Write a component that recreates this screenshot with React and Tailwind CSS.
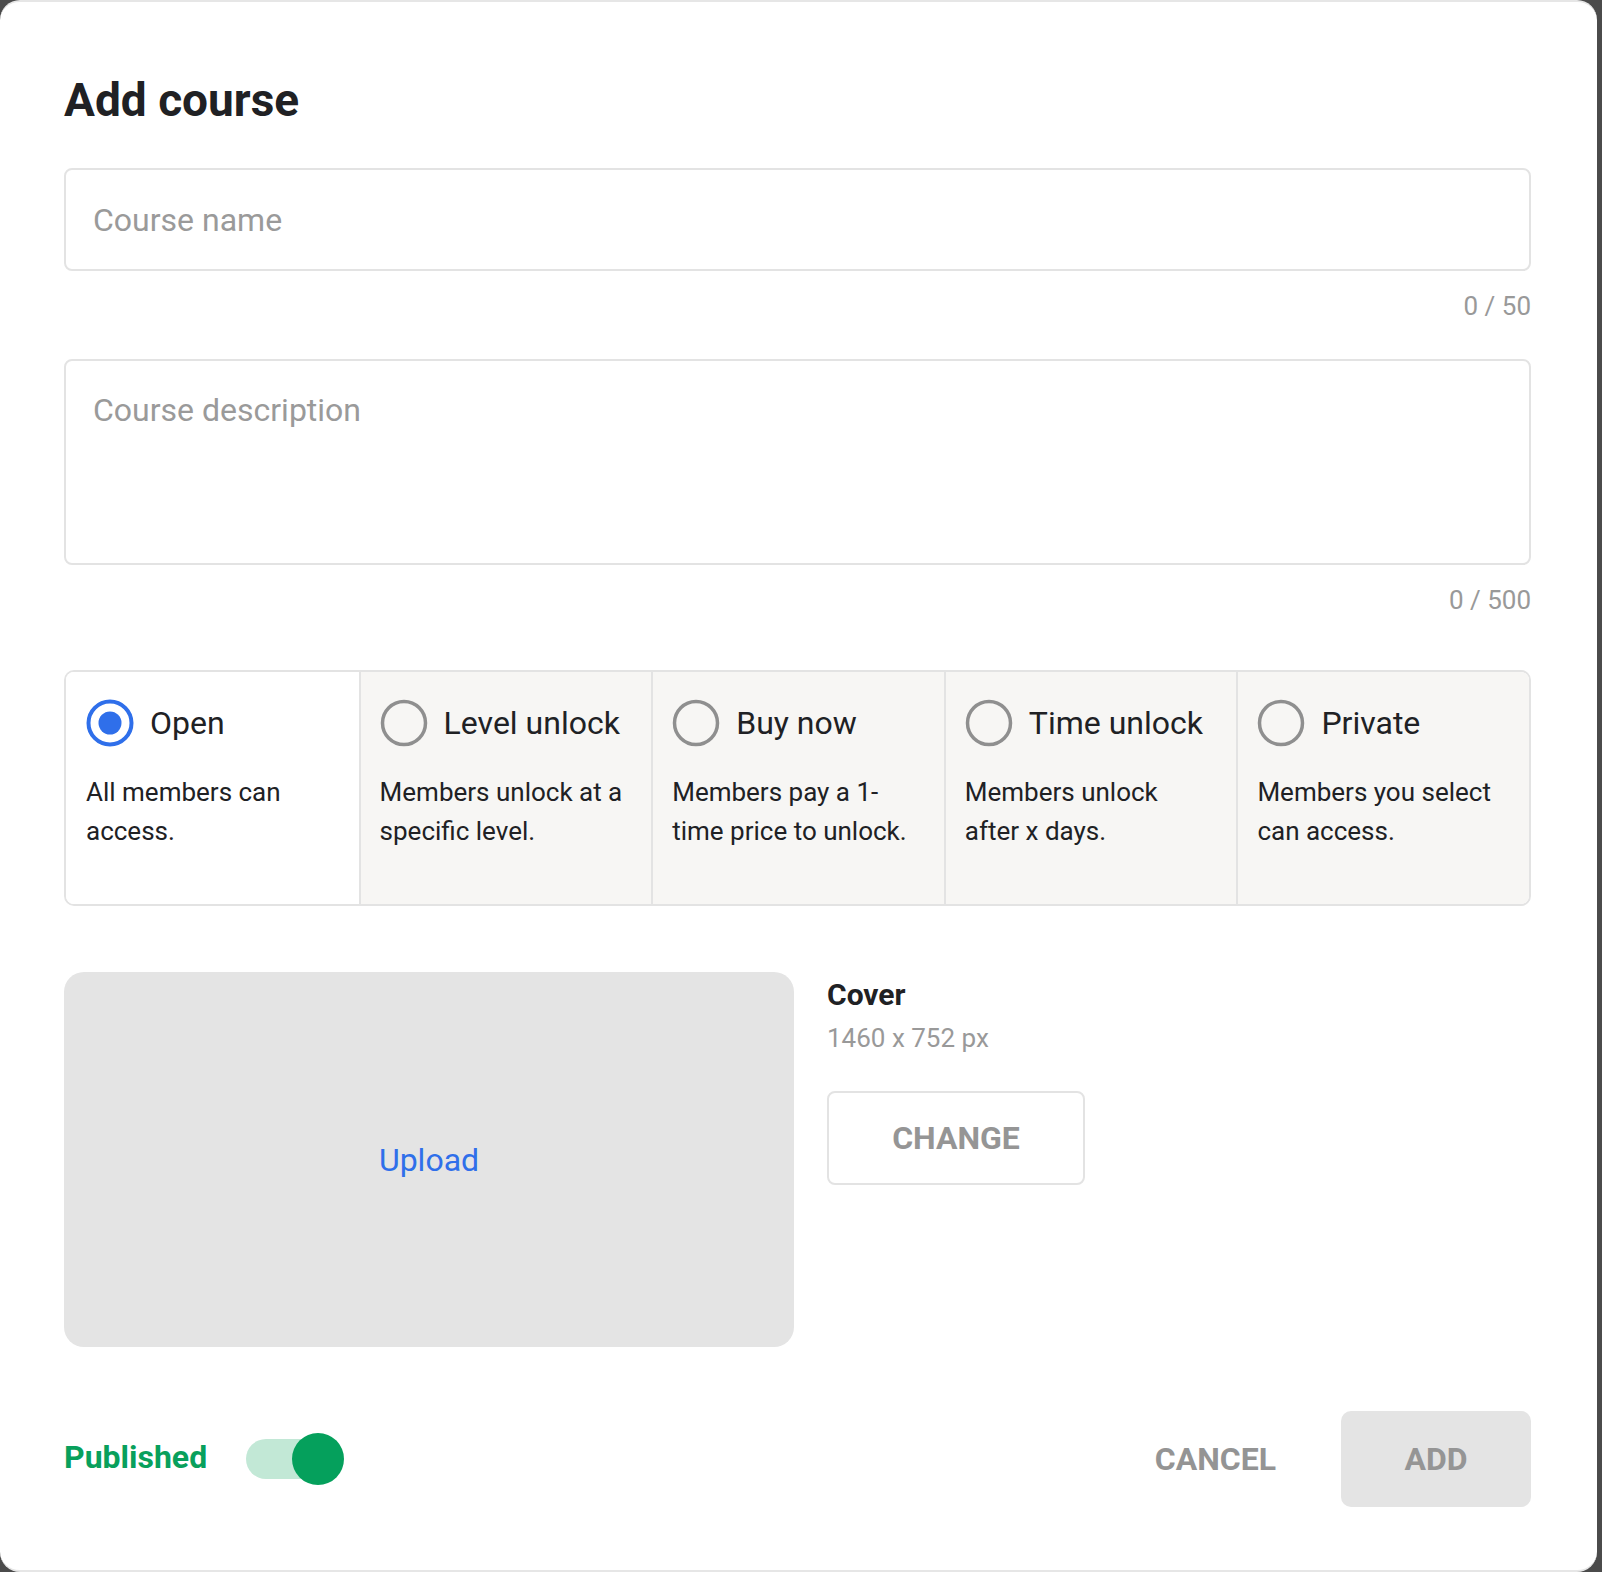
import { useState } from "react";

const ACCESS = [
  { id: "open", label: "Open", desc: "All members can access." },
  { id: "level", label: "Level unlock", desc: "Members unlock at a specific level." },
  { id: "buy", label: "Buy now", desc: "Members pay a 1-time price to unlock." },
  { id: "time", label: "Time unlock", desc: "Members unlock after x days." },
  { id: "private", label: "Private", desc: "Members you select can access." },
];

function Radio({ checked }) {
  return (
    <svg width="48" height="48" viewBox="0 0 48 48" className="shrink-0">
      {checked ? (
        <>
          <circle cx="24" cy="24" r="21.5" fill="white" stroke="#2f6fea" strokeWidth="4" />
          <circle cx="24" cy="24" r="11.5" fill="#2f6fea" />
        </>
      ) : (
        <circle cx="24" cy="24" r="21.5" fill="none" stroke="#8f8f8f" strokeWidth="3.5" />
      )}
    </svg>
  );
}

export default function App() {
  const [access, setAccess] = useState("open");
  const [published, setPublished] = useState(true);
  const [name, setName] = useState("");
  const [desc, setDesc] = useState("");

  return (
    <div
      className="w-[1602px] h-[1572px] bg-[#4b4b4b]"
      style={{ fontFamily: "Roboto, 'Noto Sans', sans-serif" }}
    >
      <div className="w-[1597px] h-[1572px] bg-white rounded-[20px] border-y-2 border-[#e6e6e6] pl-[64px] pr-[66px] pt-[70px] pb-[63px] flex flex-col">
        <h1 className="text-[46px] leading-[56px] font-bold text-[#202124]">Add course</h1>

        {/* Name */}
        <input
          value={name}
          onChange={(e) => setName(e.target.value)}
          placeholder="Course name"
          className="mt-[40px] h-[103px] w-full border-2 border-[#e3e3e3] rounded-[8px] px-[27px] text-[32px] text-[#202124] placeholder:text-[#9a9a9a] outline-none"
        />
        <div className="mt-[16px] text-right text-[26px] leading-[39px] text-[#999999]">
          {name.length} / 50
        </div>

        {/* Description */}
        <textarea
          value={desc}
          onChange={(e) => setDesc(e.target.value)}
          placeholder="Course description"
          className="mt-[33px] h-[206px] w-full border-2 border-[#e3e3e3] rounded-[8px] px-[27px] pt-[25px] text-[32px] leading-[48px] text-[#202124] placeholder:text-[#9a9a9a] outline-none resize-none"
        />
        <div className="mt-[16px] text-right text-[26px] leading-[39px] text-[#999999]">
          {desc.length} / 500
        </div>

        {/* Access type */}
        <div className="mt-[50px] h-[236px] grid grid-cols-5 border-2 border-[#e3e3e3] rounded-[10px] overflow-hidden">
          {ACCESS.map((a, i) => {
            const on = access === a.id;
            return (
              <button
                key={a.id}
                onClick={() => setAccess(a.id)}
                className={
                  "text-left pr-[20px] pt-[27px] flex flex-col " +
                  (i > 0 ? "pl-[19px] border-l-2 border-[#e3e3e3] " : "pl-[20px] ") +
                  (on ? "bg-white" : "bg-[#f7f6f4]")
                }
              >
                <div className="flex items-center gap-[16px] h-[48px]">
                  <Radio checked={on} />
                  <span className="text-[32px] leading-[48px] text-[#202124] whitespace-nowrap">
                    {a.label}
                  </span>
                </div>
                <p className="mt-[26px] text-[26px] leading-[39px] text-[#202124]">{a.desc}</p>
              </button>
            );
          })}
        </div>

        {/* Cover */}
        <div className="mt-[66px] flex gap-[33px]">
          <button className="w-[730px] h-[375px] rounded-[20px] bg-[#e4e4e4] text-[32px] text-[#2f6fea] flex items-center justify-center">
            Upload
          </button>
          <div className="flex flex-col items-start">
            <div className="mt-[5px] text-[30px] leading-[36px] font-bold text-[#202124]">Cover</div>
            <div className="mt-[6px] text-[26px] leading-[39px] text-[#999999]">1460 x 752 px</div>
            <button className="mt-[33px] w-[258px] h-[94px] border-2 border-[#e3e3e3] rounded-[8px] text-[32px] font-bold text-[#959595]">
              CHANGE
            </button>
          </div>
        </div>

        {/* Footer */}
        <div className="mt-[64px] h-[96px] flex items-center">
          <span className="text-[32px] font-bold text-[#08a05c] -mt-[4px]">Published</span>
          <button
            onClick={() => setPublished(!published)}
            className={
              "relative ml-[39px] w-[92px] h-[40px] rounded-full " +
              (published ? "bg-[#c2e8d6]" : "bg-[#d6d6d6]")
            }
          >
            <span
              className={
                "absolute top-[-6px] w-[52px] h-[52px] rounded-full " +
                (published ? "right-[-6px] bg-[#05a05c]" : "left-[-6px] bg-[#fafafa] shadow")
              }
            />
          </button>
          <div className="ml-auto flex items-center gap-[33px]">
            <button className="h-[96px] px-[32px] text-[32px] font-bold text-[#949494]">CANCEL</button>
            <button className="w-[190px] h-[96px] rounded-[10px] bg-[#e4e4e4] text-[32px] font-bold text-[#959595]">
              ADD
            </button>
          </div>
        </div>
      </div>
    </div>
  );
}
